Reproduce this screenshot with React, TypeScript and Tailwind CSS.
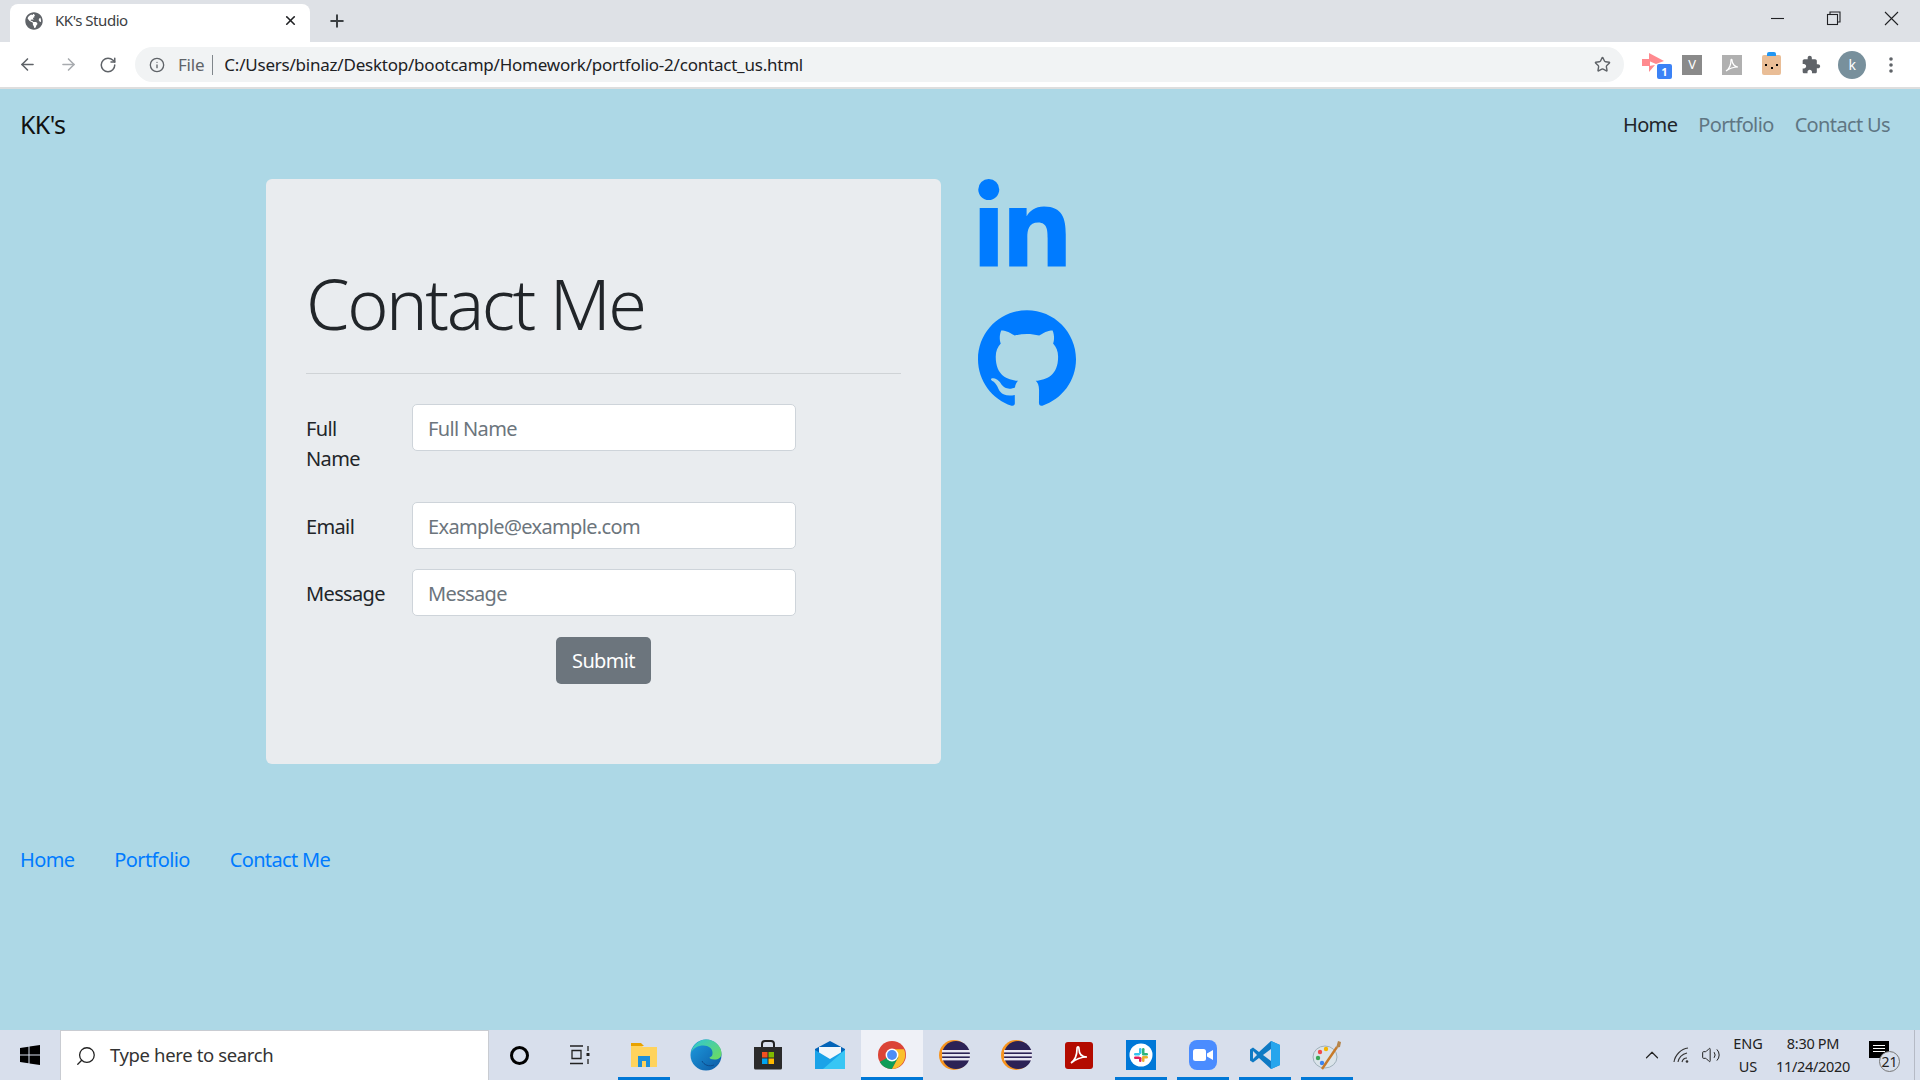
import React from "react";
import { ArrowLeft, ArrowRight, RotateCw, Star, Info, Plus, X, Search, ChevronUp, Volume2 } from "lucide-react";
import { FaLinkedinIn, FaGlobeAmericas } from "react-icons/fa";

const GH = "M12 .297c-6.63 0-12 5.373-12 12 0 5.303 3.438 9.8 8.205 11.385.6.113.82-.258.82-.577 0-.285-.01-1.04-.015-2.04-3.338.724-4.042-1.61-4.042-1.61C4.422 18.07 3.633 17.7 3.633 17.7c-1.087-.744.084-.729.084-.729 1.205.084 1.838 1.236 1.838 1.236 1.07 1.835 2.809 1.305 3.495.998.108-.776.417-1.305.76-1.605-2.665-.3-5.466-1.332-5.466-5.93 0-1.31.465-2.38 1.235-3.22-.135-.303-.54-1.523.105-3.176 0 0 1.005-.322 3.3 1.23.96-.267 1.98-.399 3-.405 1.02.006 2.04.138 3 .405 2.28-1.552 3.285-1.23 3.285-1.23.645 1.653.24 2.873.12 3.176.765.84 1.23 1.91 1.23 3.22 0 4.61-2.805 5.625-5.475 5.92.42.36.81 1.096.81 2.22 0 1.606-.015 2.896-.015 3.286 0 .315.21.69.825.57C20.565 22.092 24 17.592 24 12.297c0-6.627-5.373-12-12-12";

const Slot = ({ children, on, active }: { children: React.ReactNode; on?: boolean; active?: boolean }) => (
  <div className={`relative flex h-full w-[62px] shrink-0 items-center justify-center ${active ? "bg-[#eff1f7]" : ""}`}>
    {children}
    {on && <div className={`absolute bottom-0 h-[3px] bg-[#0078d7] ${active ? "inset-x-0" : "inset-x-[5px]"}`} />}
  </div>
);

const Eclipse = () => (
  <svg width="32" height="30" viewBox="0 0 32 30">
    <circle cx="15" cy="15" r="15" fill="#f7941e" />
    <circle cx="17" cy="15" r="14" fill="#2c2255" />
    <rect x="3" y="10" width="28" height="2.4" fill="#e8e6f2" />
    <rect x="3" y="14" width="28" height="2.4" fill="#e8e6f2" />
    <rect x="3" y="18" width="28" height="2.4" fill="#e8e6f2" />
  </svg>
);

const FormRow = ({ label, placeholder, className }: { label: string; placeholder: string; className: string }) => (
  <div className={`flex items-start ${className}`}>
    <label className="w-[106px] shrink-0 whitespace-pre-line pr-3 pt-[10px] text-[20px] leading-[30px] text-[#212529]">{label}</label>
    <input
      placeholder={placeholder}
      className="h-[47px] w-[384px] rounded-[5px] border border-[#ced4da] bg-white px-[15px] pt-[2px] text-[20px] text-[#495057] outline-none placeholder:text-[#6c757d]"
    />
  </div>
);

export default function App() {
  return (
    <div className="flex h-screen w-full flex-col overflow-hidden bg-[#add8e6] font-['Noto_Sans',sans-serif] tracking-[-0.02em]">
      {/* tab strip */}
      <div className="flex h-[42px] shrink-0 items-end bg-[#dee1e6] pl-[10px]">
        <div className="flex h-[38px] w-[300px] items-center rounded-t-[8px] bg-white pb-[5px] pl-[15px] pr-[12px]">
          <FaGlobeAmericas className="h-[18px] w-[18px] text-[#5f6368]" />
          <span className="ml-[12px] flex-1 text-[15px] tracking-[-0.03em] text-[#3c4043]">KK's Studio</span>
          <X className="h-[15px] w-[15px] text-[#202124]" strokeWidth={2.6} />
        </div>
        <div className="flex h-[38px] w-[54px] items-center justify-center pb-[5px]">
          <Plus className="h-[20px] w-[20px] text-[#3c4043]" strokeWidth={2.4} />
        </div>
        <div className="flex-1" />
        <div className="flex h-[42px] items-center self-start pb-[6px] pr-[21px]">
          <svg width="15" height="15" viewBox="0 0 15 15" stroke="#202124" strokeWidth="1.1"><path d="M1 7.500h13" /></svg>
          <svg className="ml-[41px]" width="15" height="15" viewBox="0 0 15 15" fill="none" stroke="#202124" strokeWidth="1.1">
            <rect x="1.500" y="3.500" width="10" height="10" />
            <path d="M4 3.500V1h10v10h-2.500" />
          </svg>
          <svg className="ml-[43px]" width="15" height="15" viewBox="0 0 15 15" fill="none" stroke="#202124" strokeWidth="1.1"><path d="M1 1l13 13M14 1L1 14" /></svg>
        </div>
      </div>

      {/* toolbar */}
      <div className="flex h-[47px] shrink-0 items-center border-b-2 border-[#dedede] bg-white">
        <ArrowLeft className="ml-[18px] h-[19px] w-[19px] text-[#5f6368]" strokeWidth={2} />
        <ArrowRight className="ml-[22px] h-[19px] w-[19px] text-[#a8abaf]" strokeWidth={2} />
        <RotateCw className="ml-[21px] h-[18px] w-[18px] text-[#5f6368]" strokeWidth={2} />
        <div className="ml-[18px] flex h-[35px] w-[1489px] items-center rounded-full bg-[#f1f3f4] pl-[14px] pr-[13px]">
          <Info className="h-[16px] w-[16px] text-[#5f6368]" strokeWidth={2} />
          <span className="ml-[13px] text-[17px] tracking-[-0.013em] text-[#5f6368]">File</span>
          <div className="ml-[8px] h-[20px] w-px bg-[#80868b]" />
          <span className="ml-[11px] flex-1 text-[17px] tracking-[-0.013em] text-[#202124]">C:/Users/binaz/Desktop/bootcamp/Homework/portfolio-2/contact_us.html</span>
          <Star className="h-[17px] w-[17px] text-[#5f6368]" strokeWidth={2} />
        </div>
        <div className="ml-[17px] flex items-center">
          <div className="relative h-[28px] w-[31px]">
            <svg className="absolute left-0 top-[1px]" width="24" height="22" viewBox="0 0 24 22">
              <path d="M1 7h8v7H1zM8 1l15 8-8 3-7-3zM8 14l6-1-6 7z" fill="#ff8a8f" />
            </svg>
            <span className="absolute bottom-0 right-0 flex h-[15px] w-[15px] items-center justify-center rounded-[2px] bg-[#3b82f6] text-[11px] font-bold leading-none tracking-normal text-white">1</span>
          </div>
          <div className="ml-[10px] flex h-[20px] w-[20px] items-center justify-center bg-[#8a8a8a] text-[13px] leading-none text-white">V</div>
          <div className="ml-[20px] flex h-[20px] w-[20px] items-center justify-center bg-[#b0b0b0]">
            <svg width="14" height="14" viewBox="0 0 14 14" fill="none" stroke="#fff" strokeWidth="1.2"><path d="M1 13c3-2 5-6 5-11 0-1 1-1 1 0 0 4 3 7 6 7-4 0-8 1-12 4z" /></svg>
          </div>
          <div className="relative ml-[20px] h-[20px] w-[19px] rounded-[2px] bg-[#e9bd96]">
            <div className="absolute -top-[3px] left-[5px] h-[4px] w-[9px] rounded-t-[2px] bg-[#2196f3]" />
            <div className="absolute left-[3px] top-[9px] h-[2px] w-[2px] bg-black" />
            <div className="absolute right-[3px] top-[9px] h-[2px] w-[2px] bg-black" />
            <div className="absolute left-[9px] top-[12px] h-[2px] w-[2px] bg-black" />
          </div>
          <svg className="ml-[20px]" width="20" height="20" viewBox="0 0 24 24" fill="#5f6368"><path d="M20.5 11H19V7c0-1.100-.9-2-2-2h-4V3.500C13 2.120 11.880 1 10.500 1S8 2.120 8 3.500V5H4c-1.100 0-1.990.9-1.990 2v3.800H3.500c1.490 0 2.700 1.210 2.700 2.700s-1.210 2.700-2.700 2.700H2V20c0 1.100.9 2 2 2h3.800v-1.500c0-1.490 1.210-2.700 2.700-2.700 1.490 0 2.700 1.210 2.700 2.700V22H17c1.100 0 2-.9 2-2v-4h1.500c1.380 0 2.500-1.120 2.500-2.500S21.880 11 20.500 11z" /></svg>
          <div className="ml-[17px] flex h-[28px] w-[28px] items-center justify-center rounded-full bg-[#78909c] text-[14px] leading-none text-white">k</div>
          <svg className="ml-[23px]" width="4" height="16" viewBox="0 0 4 16" fill="#5f6368">
            <circle cx="2" cy="2" r="1.8" /><circle cx="2" cy="8" r="1.8" /><circle cx="2" cy="14" r="1.8" />
          </svg>
        </div>
      </div>

      {/* page */}
      <div className="flex min-h-0 flex-1 flex-col bg-[#add8e6] tracking-[-0.04em]">
        <nav className="flex h-[71px] shrink-0 items-center justify-between pl-[20px] pr-[30px]">
          <span className="text-[25px] text-[#111]">KK's</span>
          <div className="flex gap-[21px] text-[20px]">
            <a className="text-[#212529]">Home</a>
            <a className="text-[#5f7683]">Portfolio</a>
            <a className="text-[#5f7683]">Contact Us</a>
          </div>
        </nav>

        <div className="flex h-[585px] shrink-0 pl-[266px] pt-[19px]">
          <div className="h-[585px] w-[675px] shrink-0 rounded-[6px] bg-[#e9ecef] px-[40px] pt-[82px]">
            <h1 className="text-[70px] font-light leading-[84px] tracking-[-0.035em] text-[#212529]">Contact Me</h1>
            <hr className="mt-[28px] w-[595px] border-[#cfd3d6]" />
            <div className="mt-[30px]">
              <FormRow label={"Full\nName"} placeholder="Full Name" className="" />
              <FormRow label="Email" placeholder="Example@example.com" className="mt-[28px]" />
              <FormRow label="Message" placeholder="Message" className="mt-[20px]" />
            </div>
            <div className="mt-[21px] flex w-[595px] justify-center">
              <button className="h-[47px] w-[95px] rounded-[5px] bg-[#6c757d] text-[20px] text-white">Submit</button>
            </div>
          </div>
          <div className="ml-[37px] flex flex-col">
            <FaLinkedinIn className="-ml-[6px] h-[100px] w-[100px] text-[#007bff]" />
            <svg className="mt-[30px]" width="98" height="98" viewBox="0 0 24 24" fill="#007bff"><path d={GH} /></svg>
          </div>
        </div>

        <div className="mt-[100px] flex gap-[40px] pl-[20px] text-[20px] text-[#007bff]">
          <a>Home</a>
          <a>Portfolio</a>
          <a>Contact Me</a>
        </div>
      </div>

      {/* taskbar */}
      <div className="flex h-[50px] shrink-0 items-center bg-[#d8dfec] tracking-normal">
        <div className="flex w-[60px] items-center justify-center">
          <svg width="20" height="20" viewBox="0 0 20 20" fill="#000"><path d="M0 3l8.5-1.2V9.500H0zM9.500 1.600L20 0v9.500H9.500zM0 10.500h8.500v7.700L0 17zM9.500 10.500H20V20L9.500 18.400z" /></svg>
        </div>
        <div className="flex h-[50px] w-[429px] shrink-0 items-center border-x border-t border-[#c9ccd2] bg-white pl-[14px]">
          <Search className="h-[22px] w-[22px] -scale-x-100 text-[#222]" strokeWidth={1.4} />
          <span className="ml-[13px] pb-[1px] text-[18.500px] tracking-[-0.02em] text-[#333]">Type here to search</span>
        </div>
        <div className="flex w-[60px] justify-center">
          <div className="h-[19px] w-[19px] rounded-full border-[3px] border-black" />
        </div>
        <div className="flex w-[62px] justify-center">
          <svg width="22" height="20" viewBox="0 0 22 20" fill="none" stroke="#222" strokeWidth="1.3">
            <path d="M1 1h13M3 5.500h9v8H3zM1 18.500h13M19 1v5M19 14v5" /><rect x="17.500" y="8" width="3" height="3" fill="#222" stroke="none" />
          </svg>
        </div>
        <div className="ml-[2px] flex h-full">
          <Slot on>
            <svg width="28" height="26" viewBox="0 0 28 26">
              <path d="M1 3h10l2 2h14v20H1z" fill="#ffd35c" /><path d="M1 1h10l3 3H1z" fill="#e8a200" />
              <path d="M8 25V14h12v11h-4v-6h-4v6z" fill="#1c8fd9" />
            </svg>
          </Slot>
          <Slot>
            <svg width="32" height="32" viewBox="0 0 32 32">
              <defs>
                <linearGradient id="edge" x1="0" y1="0" x2="1" y2="1"><stop offset="0" stopColor="#1e9de0" /><stop offset="1" stopColor="#0c59a4" /></linearGradient>
                <linearGradient id="edge2" x1="0" y1="0" x2="1" y2="1"><stop offset="0" stopColor="#2fc5d6" /><stop offset="1" stopColor="#6fdc5b" /></linearGradient>
              </defs>
              <circle cx="16" cy="16" r="15.500" fill="url(#edge)" />
              <path d="M1 14C3 5 10 .5 16 .5c9 0 15.500 7 15.500 14 0 4-3 6-7 6-3 0-5-1-5-2 3-1 3-3 3-5 0-4-4-7-9-7C8 6.500 3 9 1 14z" fill="url(#edge2)" />
              <path d="M12 22c2 4 7 6 12 4" stroke="#0c4a8a" strokeWidth="1" fill="none" />
            </svg>
          </Slot>
          <Slot>
            <svg width="30" height="30" viewBox="0 0 30 30">
              <path d="M9 8V4a3 3 0 013-3h6a3 3 0 013 3v4" fill="none" stroke="#222" strokeWidth="2" />
              <path d="M1 7h28v21a1.500 1.500 0 01-1.500 1.500h-25A1.500 1.500 0 011 28z" fill="#2b2b2b" />
              <rect x="9" y="12" width="5.500" height="5.500" fill="#f25022" /><rect x="15.500" y="12" width="5.500" height="5.500" fill="#7fba00" />
              <rect x="9" y="18.500" width="5.500" height="5.500" fill="#00a4ef" /><rect x="15.500" y="18.500" width="5.500" height="5.500" fill="#ffb900" />
            </svg>
          </Slot>
          <Slot>
            <svg width="30" height="28" viewBox="0 0 30 28">
              <path d="M0 8L15 0l15 8v20H0z" fill="#0364b8" />
              <path d="M4 6h22v10l-11 6-11-6z" fill="#f3f7fb" />
              <path d="M0 9l15 9 15-9v19H0z" fill="#1aa3e8" />
              <path d="M30 9v19H8z" fill="#38c6f4" />
            </svg>
          </Slot>
          <Slot on active>
            <svg width="28" height="28" viewBox="0 0 48 48">
              <circle cx="24" cy="24" r="24" fill="#db4437" />
              <path d="M24 24L3 36A24 24 0 0024 48l11-20z" fill="#0f9d58" />
              <path d="M24 14h20.500A24 24 0 0124 48l11-20z" fill="#fbc02d" />
              <circle cx="24" cy="24" r="11" fill="#fff" /><circle cx="24" cy="24" r="8.500" fill="#4d8df6" />
            </svg>
          </Slot>
          <div className="h-full w-[2px] bg-[#bcc5d6] -ml-[2px] mr-[1px]" />
          <Slot><Eclipse /></Slot>
          <Slot><Eclipse /></Slot>
          <Slot>
            <div className="flex h-[27px] w-[28px] items-center justify-center rounded-[3px] bg-[#b30b00]">
              <svg width="20" height="20" viewBox="0 0 20 20" fill="none" stroke="#fff" strokeWidth="1.700"><path d="M2 18c4-3 6-8 6-14 0-3 2-3 2 0 0 5 3 8 8 8-6 0-11 2-16 6z" /></svg>
            </div>
          </Slot>
          <Slot on>
            <div className="flex h-[30px] w-[30px] items-center justify-center bg-[#0078d7]">
              <svg width="24" height="24" viewBox="0 0 24 24">
                <circle cx="12" cy="12" r="11.500" fill="#fff" />
                <rect x="10" y="5" width="2.500" height="6" rx="1.200" fill="#36c5f0" /><rect x="5" y="10" width="6" height="2.500" rx="1.200" fill="#36c5f0" />
                <rect x="13" y="5" width="2.500" height="6" rx="1.200" fill="#2eb67d" /><rect x="13" y="10" width="6" height="2.500" rx="1.200" fill="#2eb67d" />
                <rect x="13" y="13" width="2.500" height="6" rx="1.200" fill="#ecb22e" /><rect x="5" y="13.500" width="6" height="2.500" rx="1.200" fill="#e01e5a" />
                <rect x="10" y="14" width="2.500" height="5" rx="1.200" fill="#e01e5a" /><rect x="14" y="13" width="5" height="2.500" rx="1.200" fill="#ecb22e" />
              </svg>
            </div>
          </Slot>
          <Slot on>
            <div className="flex h-[30px] w-[28px] items-center justify-center rounded-[8px] bg-[#4a8cff]">
              <svg width="20" height="12" viewBox="0 0 20 12" fill="#fff"><rect width="13" height="12" rx="2.500" /><path d="M14 4.500L20 1v10l-6-3.500z" /></svg>
            </div>
          </Slot>
          <Slot on>
            <svg width="30" height="30" viewBox="0 0 30 30">
              <path d="M21 1L9 12 3 7.500 0 9.500v11l3 2 6-4.500L21 29l9-4V5z" fill="#0e7ac4" />
              <path d="M21 1l9 4v20l-9 4z" fill="#25a5ed" />
              <path d="M21 9v12l-8-6z" fill="#d8dfec" />
              <path d="M3 11l4 4-4 4z" fill="#d8dfec" />
            </svg>
          </Slot>
          <Slot on>
            <svg width="30" height="32" viewBox="0 0 30 32">
              <ellipse cx="13" cy="18" rx="12" ry="11" fill="#dbe4ea" stroke="#9fb0ba" />
              <circle cx="8" cy="13" r="2.200" fill="#ef4b4b" /><circle cx="14" cy="10" r="2.200" fill="#f4b400" /><circle cx="6" cy="19" r="2.200" fill="#3aa757" /><circle cx="10" cy="24" r="2.200" fill="#3d85f0" />
              <path d="M10 30L25 8" stroke="#c77a2a" strokeWidth="2.400" /><path d="M24 9l2-7 3 1-1 5z" fill="#b5854c" />
            </svg>
          </Slot>
        </div>
        <div className="flex-1" />
        <div className="flex h-full items-center text-[#222]">
          <ChevronUp className="h-[22px] w-[22px]" strokeWidth={1.300} />
          <svg className="ml-[10px]" width="18" height="16" viewBox="0 0 18 16" fill="none" stroke="#333" strokeWidth="1.100">
            <path d="M1 15C2 8 8 2 15 1M5 15c1-5 5-8 9-9M9 15c.5-2 2.500-4 5-4" /><circle cx="14" cy="14.500" r="1.300" fill="#333" stroke="none" />
          </svg>
          <Volume2 className="ml-[10px] h-[20px] w-[20px]" strokeWidth={1.200} />
          <div className="ml-[9px] flex w-[36px] flex-col items-center text-[14.500px] leading-[23px]">
            <span>ENG</span><span>US</span>
          </div>
          <div className="ml-[4px] flex w-[86px] flex-col items-center text-[14.500px] leading-[23px] tracking-[-0.02em]">
            <span>8:30 PM</span><span>11/24/2020</span>
          </div>
          <div className="relative ml-[10px] h-[34px] w-[36px]">
            <div className="absolute left-[3px] top-[3px] h-[17px] w-[20px] bg-black">
              <div className="mx-[4px] mt-[4px] h-[1px] bg-white" /><div className="mx-[4px] mt-[2px] h-[1px] bg-white" /><div className="mx-[4px] mt-[2px] h-[1px] bg-white" />
            </div>
            <div className="absolute bottom-0 right-[2px] flex h-[21px] w-[21px] items-center justify-center rounded-full border border-[#777] bg-[#d8dfec] text-[14px] leading-none">21</div>
          </div>
          <div className="ml-[12px] h-full w-px bg-[#b5bac5]" />
          <div className="w-[5px]" />
        </div>
      </div>
    </div>
  );
}
